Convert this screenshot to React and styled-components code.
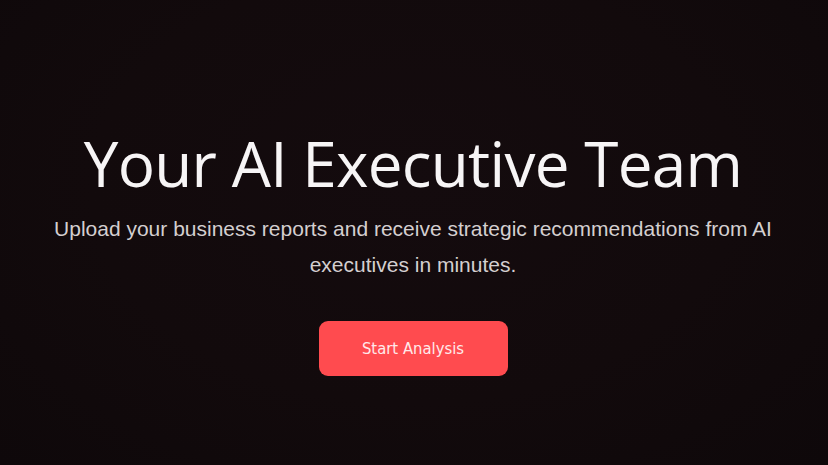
import React from "react";
import styled, { createGlobalStyle } from "styled-components";

const GlobalStyle = createGlobalStyle`
  html, body {
    margin: 0;
    padding: 0;
    background: #120a0c;
  }
  * { box-sizing: border-box; }
`;

const Hero = styled.section`
  width: 828px;
  height: 465px;
  overflow: hidden;
  display: flex;
  flex-direction: column;
  align-items: center;
  padding-top: 125px;
  padding-right: 2px;
  background: radial-gradient(ellipse at 50% 40%, #140b0e 0%, #120a0c 55%, #0e080a 100%);
`;

const Title = styled.h1`
  margin: 0;
  font-family: "Open Sans", "Noto Sans", sans-serif;
  font-weight: 400;
  font-size: 62px;
  line-height: 76px;
  letter-spacing: -0.7px;
  color: #f7f5f6;
`;

const Lead = styled.p`
  margin: 10px 0 0;
  width: 760px;
  text-align: center;
  font-family: "Liberation Sans", Arial, sans-serif;
  font-size: 21px;
  line-height: 36px;
  color: #d4cfd0;
`;

const PrimaryButton = styled.button`
  margin-top: 38px;
  width: 189px;
  height: 55px;
  border: none;
  border-radius: 9px;
  background: #ff4b4f;
  color: #ffe9ea;
  font-family: "DejaVu Sans Condensed", "DejaVu Sans", sans-serif;
  font-size: 16.5px;
  cursor: pointer;
`;

export default function App() {
  return (
    <>
      <GlobalStyle />
      <Hero>
        <Title>Your AI Executive Team</Title>
        <Lead>
          Upload your business reports and receive strategic recommendations from AI executives in minutes.
        </Lead>
        <PrimaryButton>Start Analysis</PrimaryButton>
      </Hero>
    </>
  );
}
